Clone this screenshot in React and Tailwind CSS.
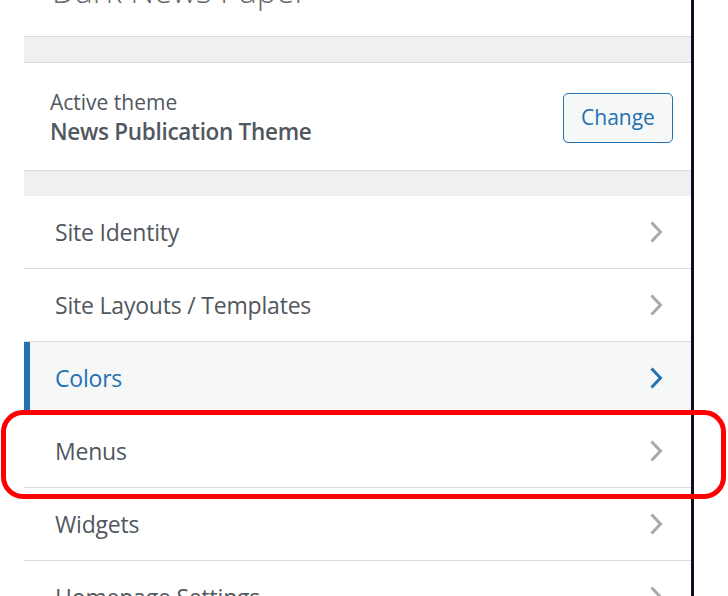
import React from "react";

function Chevron({ color }) {
  return (
    <svg width="16" height="24" viewBox="0 0 16 24" className="shrink-0">
      <path d="M3.5 2.5 L12.5 12 L3.5 21.5" fill="none" stroke={color} strokeWidth="3" strokeLinecap="butt" strokeLinejoin="miter" />
    </svg>
  );
}

function Row({ label, active }) {
  return (
    <div
      className={
        "h-[73px] shrink-0 flex items-center justify-between border-b border-[#dcdcde] pr-[27px] " +
        (active ? "bg-[#f6f7f7] border-l-[6px] border-l-[#2271b1] pl-[25px]" : "bg-white pl-[31px]")
      }
    >
      <span className={"text-[23px] leading-[30px] font-medium tracking-[-0.2px] whitespace-nowrap " + (active ? "text-[#2271b1]" : "text-[#50575e]")}>{label}</span>
      <Chevron color={active ? "#2271b1" : "#a7aaad"} />
    </div>
  );
}

export default function App() {
  return (
    <div className="relative w-[728px] h-[596px] overflow-hidden bg-white flex" style={{ fontFamily: '"Open Sans", "Noto Sans", sans-serif' }}>
      <div className="w-[24px] shrink-0 bg-white" />
      <div className="w-[667px] shrink-0 flex flex-col bg-white">
        <div className="h-[36px] shrink-0 pl-[28px]">
          <div className="mt-[-26px] text-[33px] leading-[33px] font-light text-[#646970] whitespace-nowrap">Dark News Paper</div>
        </div>
        <div className="h-[27px] shrink-0 bg-[#f0f0f1] border-y border-[#dcdcde]" />
        <div className="h-[107px] shrink-0 flex items-center justify-between pl-[26px] pr-[18px]">
          <div className="flex flex-col">
            <span className="text-[21px] leading-[30px] text-[#50575e]">Active theme</span>
            <span className="text-[22.5px] leading-[30px] font-semibold tracking-[-0.3px] text-[#50575e]">News Publication Theme</span>
          </div>
          <button className="w-[110px] h-[50px] mt-[3px] rounded-[5px] border border-[#2271b1] bg-[#f6f7f7] text-[#2271b1] text-[21px]">Change</button>
        </div>
        <div className="h-[26px] shrink-0 bg-[#f0f0f1] border-t border-[#dcdcde]" />
        <Row label="Site Identity" />
        <Row label="Site Layouts / Templates" />
        <Row label="Colors" active />
        <Row label="Menus" />
        <Row label="Widgets" />
        <Row label="Homepage Settings" />
      </div>
      <div className="w-[3px] shrink-0 bg-[#120c1e]" />
      <div className="flex-1 bg-white" />
      <div className="absolute left-[1px] top-[410px] w-[725px] h-[89px] border-[5px] border-[#ff0000] rounded-[22px]" />
    </div>
  );
}
